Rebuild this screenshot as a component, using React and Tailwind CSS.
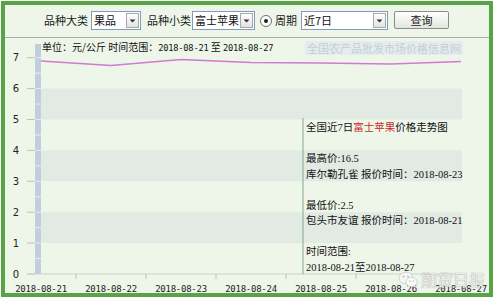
const days = ["2018-08-21", "2018-08-22", "2018-08-23", "2018-08-24", "2018-08-25", "2018-08-26", "2018-08-27"];
const lineY = [61, 65.5, 59.5, 62.5, 63, 64, 61.5];
const yOf = (v) => 274 - 30.9 * v;

function Select({ value, className }) {
  return (
    <div className={"flex h-[19px] items-stretch border border-[#7f9db9] bg-white " + className}>
      <div className="flex-1 overflow-hidden whitespace-nowrap pl-[2px] text-[11px] leading-[17px] text-[#111]">{value}</div>
      <div className="m-[1px] flex w-[13px] shrink-0 items-center justify-center border border-[#a9a9a9] bg-gradient-to-b from-white to-[#e2e2e2]">
        <svg width="7" height="4" viewBox="0 0 7 4">
          <path d="M0.5 0.5h6L3.5 3.5z" fill="#333" />
        </svg>
      </div>
    </div>
  );
}

function Chart() {
  return (
    <svg width="484" height="255" viewBox="5 38 484 255" className="block">
      {[5, 3, 1].map((v) => (
        <rect key={v} x="41" y={yOf(v + 1)} width="421" height="30.9" fill="#e1eae3" />
      ))}
      <rect x="35" y="44" width="6" height="230" fill="#c2cddd" />
      {[0.5, 1, 1.5, 2, 2.5, 3, 3.5, 4, 4.5, 5, 5.5, 6, 6.5, 7].map((v) => (
        <line key={v} x1="35" x2="41" y1={yOf(v)} y2={yOf(v)} stroke="#e6ebf1" strokeWidth="1" />
      ))}
      {[0, 1, 2, 3, 4, 5, 6, 7].map((v) => (
        <g key={v}>
          <line x1="27" x2="35" y1={yOf(v)} y2={yOf(v)} stroke="#b9c2b9" />
          <text
            x="16"
            y={yOf(v) + 3.5}
            textAnchor="middle"
            fontSize="10"
            fill="#222"
            fontFamily="'DejaVu Sans', sans-serif"
          >
            {v}
          </text>
        </g>
      ))}
      <line x1="27" x2="462" y1="274" y2="274" stroke="#cbd3cb" />
      {[0, 1, 2, 3, 4, 5].map((i) => (
        <line key={i} x1={76 + 70 * i} x2={76 + 70 * i} y1="274" y2="279" stroke="#b9c2b9" />
      ))}
      {days.map((d, i) => (
        <text
          key={d}
          x={41 + 70 * i}
          y="291.5"
          textAnchor="middle"
          fontSize="9"
          letterSpacing="-0.25"
          fill="#222"
          fontFamily="'DejaVu Sans Mono', monospace"
        >
          {d}
        </text>
      ))}
      <polyline
        points={lineY.map((y, i) => `${41 + 70 * i},${y}`).join(" ")}
        fill="none"
        stroke="#d27ad0"
        strokeWidth="1.6"
      />
      <line x1="303" x2="303" y1="118" y2="274" stroke="#86a886" />
    </svg>
  );
}

export default function App() {
  const mono = "font-['DejaVu_Sans_Mono',monospace] text-[8.7px] tracking-[-0.2px]";
  return (
    <div className="h-[301px] w-[500px] bg-white pl-[1px] pt-[1px]">
      <div className="flex h-[296px] w-[492px] flex-col border-4 border-[#58a444] bg-[#eef6ea] font-['Noto_Sans_CJK_SC',sans-serif] text-[#1a1a1a]">
        <div className="flex h-[33px] shrink-0 items-center border-b border-[#a7afa7] pb-[1px] text-[11px]">
          <span className="ml-[39px] w-[44px]">品种大类</span>
          <Select value="果品" className="ml-[3px] w-[50px]" />
          <span className="ml-[6px] w-[44px]">品种小类</span>
          <Select value="富士苹果" className="ml-[1px] w-[63px]" />
          <div className="ml-[5px] flex h-[12px] w-[12px] items-center justify-center rounded-full border border-[#6f6f6f] bg-white">
            <div className="h-[4px] w-[4px] rounded-full bg-[#222]" />
          </div>
          <span className="ml-[3px] text-[11px]">周期</span>
          <Select value="近7日" className="ml-[4px] w-[87px]" />
          <button className="mb-[2px] ml-[6px] h-[18px] w-[55px] rounded-[2px] border border-[#8c8c8c] bg-gradient-to-b from-white to-[#e4e6dc] text-[11px] leading-[16px]">
            查询
          </button>
        </div>
        <div className="relative flex-1">
          <Chart />
          <div className="absolute left-[37px] top-[2px] whitespace-nowrap text-[10px] leading-[14px] text-[#111]">
            单位：元/公斤 时间范围：<span className={mono}>2018-08-21</span> 至 <span className={mono}>2018-08-27</span>
          </div>
          <div className="absolute left-[300px] top-[3px] h-[14px] w-[158px] whitespace-nowrap bg-[#e4ecee] pl-[2px] text-[11px] leading-[14px] text-[#c3cfd8]">
            全国农产品批发市场价格信息网
          </div>
          <div className="absolute left-[301px] top-[82px] whitespace-nowrap font-['Liberation_Serif','Noto_Sans_CJK_SC',serif] text-[10.5px] leading-[15.5px] text-[#111]">
            <div>
              全国近7日<span className="text-[#c62c28]">富士苹果</span>价格走势图
            </div>
            <div>&nbsp;</div>
            <div>最高价:16.5</div>
            <div>库尔勒孔雀 报价时间：2018-08-23</div>
            <div>&nbsp;</div>
            <div>最低价:2.5</div>
            <div>包头市友谊 报价时间：2018-08-21</div>
            <div>&nbsp;</div>
            <div>时间范围:</div>
            <div>2018-08-21至2018-08-27</div>
          </div>
          <div className="absolute bottom-[5px] right-[4px] flex items-center gap-[3px]">
            <svg width="20" height="17" viewBox="0 0 20 17">
              <ellipse cx="8" cy="7" rx="7" ry="5.8" fill="#f6f6f6" stroke="#c4c4c4" strokeWidth="0.7" />
              <circle cx="5.5" cy="5.5" r="0.9" fill="#b0b0b0" />
              <circle cx="10" cy="5.5" r="0.9" fill="#b0b0b0" />
              <ellipse cx="13.5" cy="11" rx="5.6" ry="4.6" fill="#fbfbfb" stroke="#c4c4c4" strokeWidth="0.7" />
              <circle cx="11.8" cy="10" r="0.7" fill="#b0b0b0" />
              <circle cx="15.2" cy="10" r="0.7" fill="#b0b0b0" />
            </svg>
            <span className="text-[16px] leading-[18px] text-[#ececec] [text-shadow:0_0_1px_#8a8a8a]">
              期货日报
            </span>
          </div>
        </div>
      </div>
    </div>
  );
}
